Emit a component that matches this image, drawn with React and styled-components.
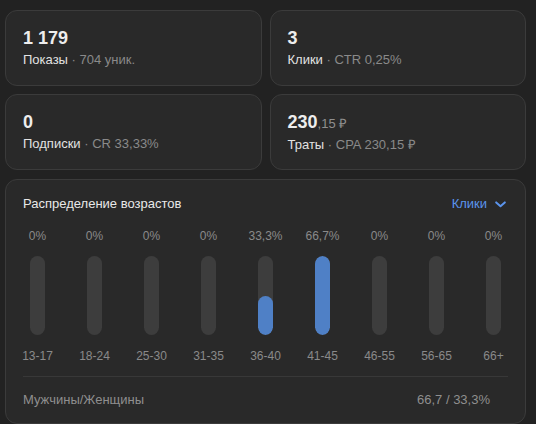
import React from "react";
import styled, { createGlobalStyle } from "styled-components";

const Global = createGlobalStyle`
  html, body { margin: 0; padding: 0; background: #222222; }
  body { font-family: "Liberation Sans", Arial, sans-serif; }
`;

const Page = styled.div`
  padding: 10px 10px 0 5px;
  width: 536px;
  height: 424px;
  box-sizing: border-box;
  overflow: hidden;
`;

const Grid = styled.div`
  display: grid;
  grid-template-columns: 1fr 1fr;
  gap: 8px;
`;

const Card = styled.div`
  background: #292929;
  border: 1px solid #3b3b3b;
  border-radius: 12px;
  box-sizing: border-box;
`;

const StatCard = styled(Card)`
  height: 76px;
  padding: 0 17px;
  display: flex;
  flex-direction: column;
  justify-content: center;
`;

const Value = styled.div`
  font-size: 18px;
  line-height: 21px;
  font-weight: 700;
  color: #ededed;
  margin-bottom: 3px;
`;

const Fraction = styled.span`
  font-size: 13px;
  font-weight: 400;
  color: #8f8f8f;
`;

const Label = styled.div`
  font-size: 13px;
  line-height: 16px;
  color: #e2e2e2;
`;

const Muted = styled.span`
  color: #8a8a8a;
`;

const AgeCard = styled(Card)`
  margin-top: 9px;
  height: 245px;
  padding: 16px 0 0;
`;

const Header = styled.div`
  display: flex;
  justify-content: space-between;
  align-items: center;
  padding: 0 17px;
  height: 16px;
`;

const Title = styled.div`
  font-size: 13px;
  line-height: 16px;
  color: #e8e8e8;
`;

const Select = styled.div`
  display: flex;
  align-items: center;
  gap: 8px;
  font-size: 13px;
  line-height: 16px;
  color: #5b94ec;
  margin-right: 2px;
`;

const Columns = styled.div`
  display: grid;
  grid-template-columns: repeat(9, 57px);
  padding: 0 3px;
  margin-top: 17px;
`;

const Column = styled.div`
  display: flex;
  flex-direction: column;
  align-items: center;
`;

const Small = styled.div`
  font-size: 12px;
  line-height: 14px;
  color: #8a8a8a;
  white-space: nowrap;
`;

const Track = styled.div`
  width: 15px;
  height: 79px;
  border-radius: 8px;
  background: #3d3d3d;
  margin: 13px 0 14px;
  display: flex;
  align-items: flex-end;
  overflow: hidden;
`;

const Fill = styled.div`
  width: 100%;
  border-radius: 8px;
  background: #4f80c6;
`;

const Divider = styled.div`
  margin: 13px 17px 0;
  height: 1px;
  background: #383838;
`;

const Footer = styled.div`
  display: flex;
  justify-content: space-between;
  padding: 0 35px 0 17px;
  margin-top: 15px;
  font-size: 13px;
  line-height: 16px;
  color: #8f8f8f;
`;

const stats = [
  { value: "1 179", label: "Показы", extra: "704 уник." },
  { value: "3", label: "Клики", extra: "CTR 0,25%" },
  { value: "0", label: "Подписки", extra: "CR 33,33%" },
  { value: "230", fraction: ",15 ₽", label: "Траты", extra: "CPA 230,15 ₽" },
];

const ages = [
  ["13-17", 0, "0%"],
  ["18-24", 0, "0%"],
  ["25-30", 0, "0%"],
  ["31-35", 0, "0%"],
  ["36-40", 33.3, "33,3%"],
  ["41-45", 66.7, "66,7%"],
  ["46-55", 0, "0%"],
  ["56-65", 0, "0%"],
  ["66+", 0, "0%"],
];

const max = 66.7;

export default function App() {
  return (
    <Page>
      <Global />
      <Grid>
        {stats.map((s) => (
          <StatCard key={s.label}>
            <Value>
              {s.value}
              {s.fraction && <Fraction>{s.fraction}</Fraction>}
            </Value>
            <Label>
              {s.label}
              <Muted> · {s.extra}</Muted>
            </Label>
          </StatCard>
        ))}
      </Grid>
      <AgeCard>
        <Header>
          <Title>Распределение возрастов</Title>
          <Select>
            Клики
            <svg width="11" height="7" viewBox="0 0 11 7" fill="none">
              <path d="M1.2 1.4 L5.5 5.2 L9.8 1.4" stroke="#5b94ec" strokeWidth="2" strokeLinecap="round" strokeLinejoin="round" />
            </svg>
          </Select>
        </Header>
        <Columns>
          {ages.map(([name, v, pct]) => (
            <Column key={name}>
              <Small>{pct}</Small>
              <Track>
                {v > 0 && <Fill style={{ height: `${(v / max) * 100}%` }} />}
              </Track>
              <Small>{name}</Small>
            </Column>
          ))}
        </Columns>
        <Divider />
        <Footer>
          <span>Мужчины/Женщины</span>
          <span>66,7 / 33,3%</span>
        </Footer>
      </AgeCard>
    </Page>
  );
}
